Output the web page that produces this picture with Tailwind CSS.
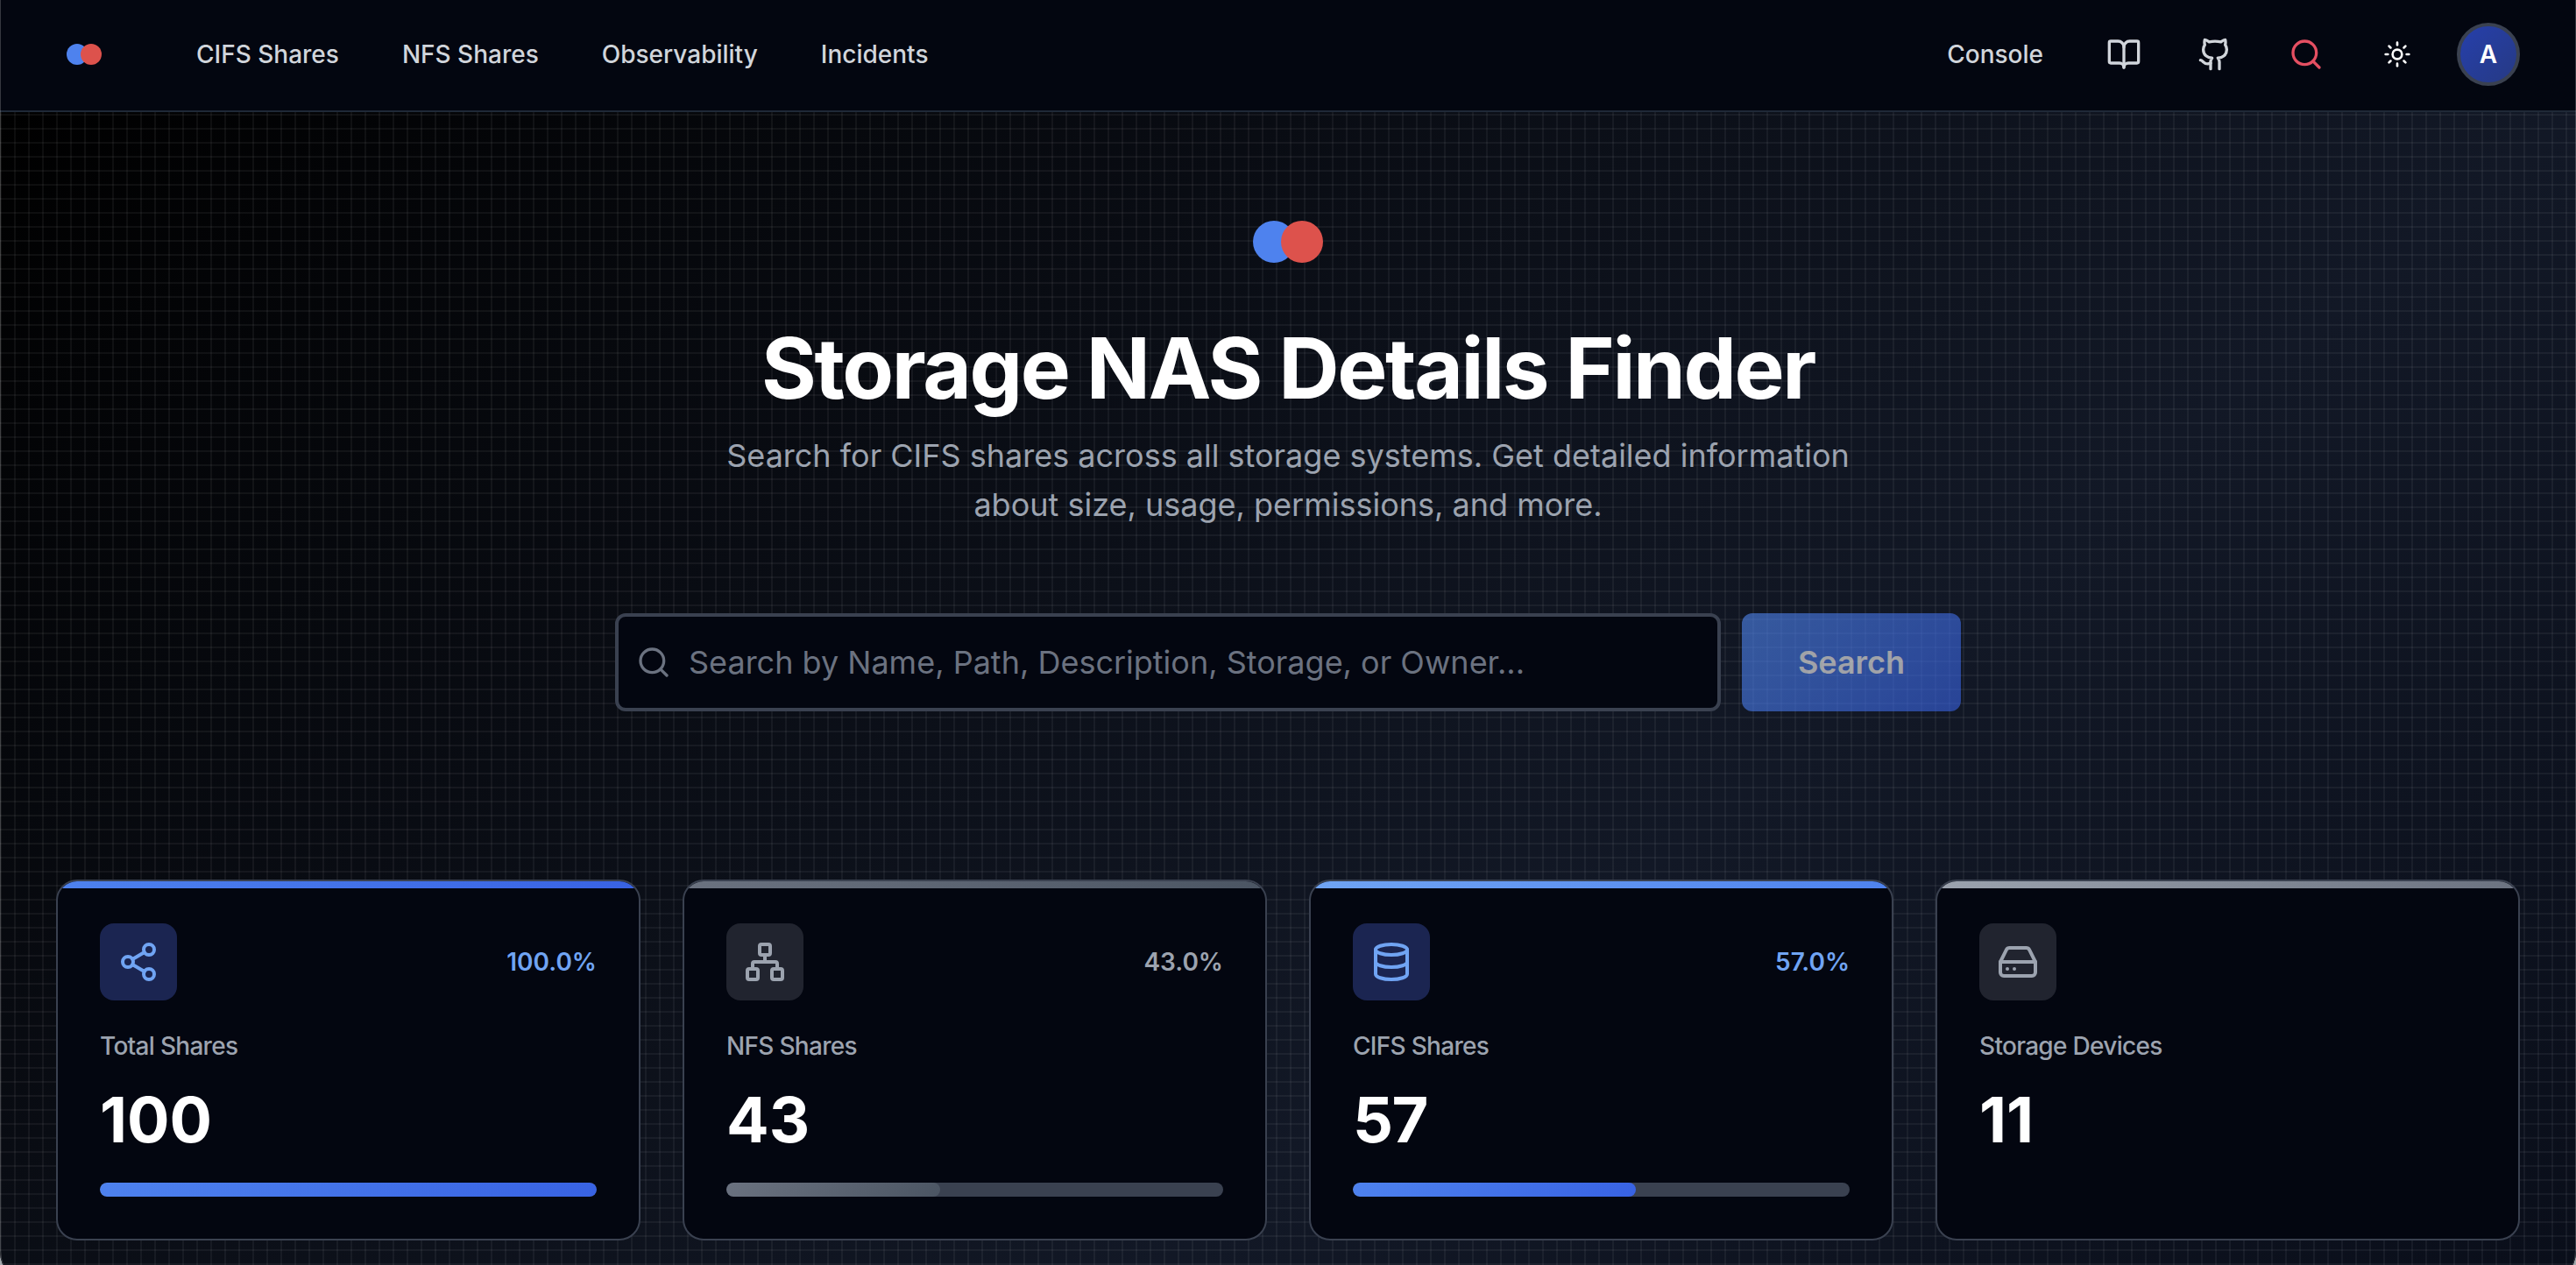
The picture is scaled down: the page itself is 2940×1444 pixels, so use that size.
<!DOCTYPE html>
<html lang="en">
<head>
  <meta charset="UTF-8" />
  <meta name="viewport" content="width=device-width, initial-scale=1.0" />
  <title>Storage NAS Details Finder</title>
  <script src="https://cdn.jsdelivr.net/npm/@tailwindcss/browser@4"></script>
</head>
<body class="bg-[#a3a8ad] h-[1444px] overflow-hidden font-['Inter',sans-serif] antialiased">
  <div class="relative h-[1468px] overflow-hidden rounded-b-[40px] bg-black">
    <!-- Navbar -->
    <nav class="flex h-32 items-center justify-between border-b-2 border-[#1f2937] bg-[#030610] pl-[76px] pr-16 pb-0.5 text-[28px] font-medium text-[#d1d5db]">
      <div class="flex items-center">
        <div class="flex">
          <span class="size-6 rounded-full bg-[#4e82ee]"></span>
          <span class="-ml-2 size-6 rounded-full bg-[#dd524c]"></span>
        </div>
        <div class="ml-27 flex gap-18">
          <a href="#">CIFS Shares</a>
          <a href="#">NFS Shares</a>
          <a href="#">Observability</a>
          <a href="#">Incidents</a>
        </div>
      </div>
      <div class="flex items-center gap-8">
        <a href="#" class="px-6">Console</a>
        <button class="flex size-[72px] items-center justify-center">
          <svg class="size-10" viewBox="0 0 24 24" fill="none" stroke="currentColor" stroke-width="2" stroke-linecap="round" stroke-linejoin="round"><path d="M12 7v14" /><path d="M3 18a1 1 0 0 1-1-1V4a1 1 0 0 1 1-1h5a4 4 0 0 1 4 4 4 4 0 0 1 4-4h5a1 1 0 0 1 1 1v13a1 1 0 0 1-1 1h-6a3 3 0 0 0-3 3 3 3 0 0 0-3-3z" /></svg>
        </button>
        <button class="flex size-[72px] items-center justify-center">
          <svg class="size-10" viewBox="0 0 24 24" fill="none" stroke="currentColor" stroke-width="2" stroke-linecap="round" stroke-linejoin="round"><path d="M15 22v-4a4.8 4.8 0 0 0-1-3.5c3 0 6-2 6-5.5.08-1.25-.27-2.48-1-3.5.28-1.15.28-2.35 0-3.5 0 0-1 0-3 1.5-2.64-.5-5.36-.5-8 0C6 2 5 2 5 2c-.3 1.15-.3 2.35 0 3.5A5.403 5.403 0 0 0 4 9c0 3.5 3 5.5 6 5.5-.39.49-.68 1.05-.85 1.65-.17.6-.22 1.23-.15 1.85v4" /><path d="M9 18c-4.51 2-5-2-7-2" /></svg>
        </button>
        <button class="flex size-[72px] items-center justify-center text-[#e54f62]">
          <svg class="size-10" viewBox="0 0 24 24" fill="none" stroke="currentColor" stroke-width="2" stroke-linecap="round" stroke-linejoin="round"><circle cx="11" cy="11" r="8" /><path d="m21 21-4.3-4.3" /></svg>
        </button>
        <button class="flex size-[72px] items-center justify-center text-white">
          <svg class="size-8" viewBox="0 0 24 24" fill="none" stroke="currentColor" stroke-width="2" stroke-linecap="round" stroke-linejoin="round"><circle cx="12" cy="12" r="4" /><path d="M12 2v2" /><path d="M12 20v2" /><path d="m4.93 4.93 1.41 1.41" /><path d="m17.66 17.66 1.41 1.41" /><path d="M2 12h2" /><path d="M20 12h2" /><path d="m6.34 17.66-1.41 1.41" /><path d="m19.07 4.93-1.41 1.41" /></svg>
        </button>
        <div class="flex size-[72px] items-center justify-center rounded-full border-4 border-[#3a4150] bg-linear-135/srgb from-[#263fab] to-[#263a84] font-semibold text-white">A</div>
      </div>
    </nav>

    <!-- Hero -->
    <main class="h-[2400px] bg-linear-to-br/srgb from-black via-[#121826] to-[#030610]">
      <div class="h-full bg-[linear-gradient(to_right,rgba(255,255,255,0.05)_2px,transparent_2px),linear-gradient(to_bottom,rgba(255,255,255,0.05)_2px,transparent_2px)] bg-[size:16px_16px] bg-[position:0_2px] px-16 pt-[124px]">
        <div class="flex justify-center">
          <span class="size-12 rounded-full bg-[#4e82ee]"></span>
          <span class="-ml-4 size-12 rounded-full bg-[#dd524c]"></span>
        </div>
        <h1 class="mt-[72px] text-center text-8xl font-bold tracking-tight text-white">Storage NAS Details Finder</h1>
        <p class="mx-auto mt-6 w-[1344px] text-center text-4xl leading-[56px] text-[#9ca3af]">Search for CIFS shares across all storage systems. Get detailed information about size, usage, permissions, and more.</p>

        <form class="mx-auto mt-24 flex h-28 w-[1536px] gap-6">
          <label class="flex flex-1 items-center gap-5 rounded-xl border-4 border-[#3a4150] bg-[#030610] pl-5 text-[#6b7280]">
            <svg class="size-10" viewBox="0 0 24 24" fill="none" stroke="currentColor" stroke-width="2" stroke-linecap="round" stroke-linejoin="round"><circle cx="11" cy="11" r="8" /><path d="m21 21-4.3-4.3" /></svg>
            <input type="text" placeholder="Search by Name, Path, Description, Storage, or Owner..." class="h-full flex-1 text-4xl placeholder:text-[#6b7280] outline-none" />
          </label>
          <button type="button" class="w-[250px] rounded-xl bg-linear-135/srgb from-[#5087f0] to-[#3862e3] text-4xl font-semibold text-white opacity-60">Search</button>
        </form>

        <!-- Stat cards -->
        <div class="mt-48 grid grid-cols-4 gap-12">
          <div class="relative h-[412px] overflow-hidden rounded-3xl border-2 border-[#3a4150] bg-[#030610] p-12">
            <div class="absolute inset-x-0 top-0 h-2 bg-linear-135/srgb from-[#4e82ee] to-[#3862e3]"></div>
            <div class="flex items-center justify-between">
              <div class="flex size-[88px] items-center justify-center rounded-2xl bg-[#1b2551] text-[#70a4f3]">
                <svg class="size-12" viewBox="0 0 24 24" fill="none" stroke="currentColor" stroke-width="2" stroke-linecap="round" stroke-linejoin="round"><circle cx="18" cy="5" r="3" /><circle cx="6" cy="12" r="3" /><circle cx="18" cy="19" r="3" /><path d="m8.59 13.51 6.83 3.98" /><path d="m15.41 6.51-6.82 3.98" /></svg>
              </div>
              <span class="text-[28px] font-semibold text-[#70a4f3]">100.0%</span>
            </div>
            <p class="mt-8 text-[28px] leading-10 font-medium tracking-tight text-[#9ca3af]">Total Shares</p>
            <p class="mt-6 text-7xl leading-[80px] font-bold text-white">100</p>
            <div class="mt-8 h-4 overflow-hidden rounded-full bg-[#3a4150]">
              <div class="h-full rounded-full bg-linear-135/srgb from-[#4e82ee] to-[#3862e3]" style="width: 100%"></div>
            </div>
          </div>

          <div class="relative h-[412px] overflow-hidden rounded-3xl border-2 border-[#3a4150] bg-[#030610] p-12">
            <div class="absolute inset-x-0 top-0 h-2 bg-linear-135/srgb from-[#6b7280] to-[#4b5563]"></div>
            <div class="flex items-center justify-between">
              <div class="flex size-[88px] items-center justify-center rounded-2xl bg-[#21242f] text-[#9ca3af]">
                <svg class="size-12" viewBox="0 0 24 24" fill="none" stroke="currentColor" stroke-width="2" stroke-linecap="round" stroke-linejoin="round"><rect x="16" y="16" width="6" height="6" rx="1" /><rect x="2" y="16" width="6" height="6" rx="1" /><rect x="9" y="2" width="6" height="6" rx="1" /><path d="M5 16v-3a1 1 0 0 1 1-1h12a1 1 0 0 1 1 1v3" /><path d="M12 12V8" /></svg>
              </div>
              <span class="text-[28px] font-semibold text-[#9ca3af]">43.0%</span>
            </div>
            <p class="mt-8 text-[28px] leading-10 font-medium tracking-tight text-[#9ca3af]">NFS Shares</p>
            <p class="mt-6 text-7xl leading-[80px] font-bold text-white">43</p>
            <div class="mt-8 h-4 overflow-hidden rounded-full bg-[#3a4150]">
              <div class="h-full rounded-full bg-linear-135/srgb from-[#6b7280] to-[#4b5563]" style="width: 43%"></div>
            </div>
          </div>

          <div class="relative h-[412px] overflow-hidden rounded-3xl border-2 border-[#3a4150] bg-[#030610] p-12">
            <div class="absolute inset-x-0 top-0 h-2 bg-linear-135/srgb from-[#70a4f3] to-[#4e82ee]"></div>
            <div class="flex items-center justify-between">
              <div class="flex size-[88px] items-center justify-center rounded-2xl bg-[#1b2551] text-[#70a4f3]">
                <svg class="size-12" viewBox="0 0 24 24" fill="none" stroke="currentColor" stroke-width="2" stroke-linecap="round" stroke-linejoin="round"><ellipse cx="12" cy="5" rx="9" ry="3" /><path d="M3 5v14a9 3 0 0 0 18 0V5" /><path d="M3 12a9 3 0 0 0 18 0" /></svg>
              </div>
              <span class="text-[28px] font-semibold text-[#70a4f3]">57.0%</span>
            </div>
            <p class="mt-8 text-[28px] leading-10 font-medium tracking-tight text-[#9ca3af]">CIFS Shares</p>
            <p class="mt-6 text-7xl leading-[80px] font-bold tracking-[-0.02em] text-white">57</p>
            <div class="mt-8 h-4 overflow-hidden rounded-full bg-[#3a4150]">
              <div class="h-full rounded-full bg-linear-135/srgb from-[#4e82ee] to-[#3862e3]" style="width: 57%"></div>
            </div>
          </div>

          <div class="relative h-[412px] overflow-hidden rounded-3xl border-2 border-[#3a4150] bg-[#030610] p-12">
            <div class="absolute inset-x-0 top-0 h-2 bg-linear-135/srgb from-[#9ca3af] to-[#6b7280]"></div>
            <div class="flex size-[88px] items-center justify-center rounded-2xl bg-[#21242f] text-[#9ca3af]">
              <svg class="size-12" viewBox="0 0 24 24" fill="none" stroke="currentColor" stroke-width="2" stroke-linecap="round" stroke-linejoin="round"><path d="M22 12H2" /><path d="M5.45 5.11 2 12v6a2 2 0 0 0 2 2h16a2 2 0 0 0 2-2v-6l-3.45-6.89A2 2 0 0 0 16.76 4H7.24a2 2 0 0 0-1.79 1.11z" /><path d="M6 16h.01" /><path d="M10 16h.01" /></svg>
            </div>
            <p class="mt-8 text-[28px] leading-10 font-medium tracking-tight text-[#9ca3af]">Storage Devices</p>
            <p class="mt-6 text-7xl leading-[80px] font-bold text-white">11</p>
          </div>
        </div>
      </div>
    </main>

    <!-- Window edge -->
    <div class="pointer-events-none absolute inset-0 rounded-b-[40px] border-x border-white/20"></div>
  </div>
</body>
</html>
